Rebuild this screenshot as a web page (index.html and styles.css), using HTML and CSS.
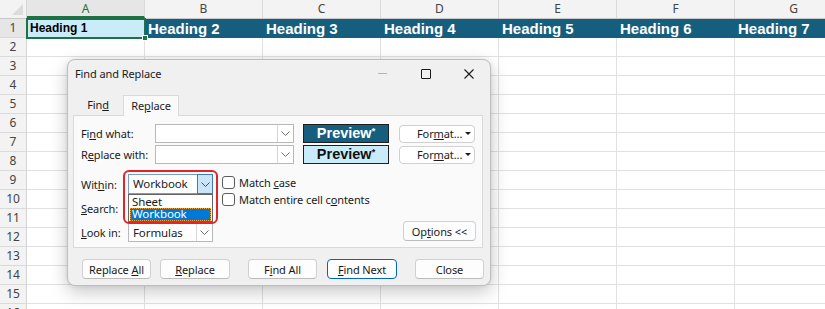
FILE: index.html
```html
<!DOCTYPE html>
<html lang="en">

<head>
  <meta charset="utf-8" />
  <title>Find and Replace</title>
  <link rel="stylesheet" href="styles.css">
</head>

<body>

  <div class="sheet">
    <div class="corner"><span class="corner-tri"></span></div>

    <div class="col-heads">
      <div class="col-head active">A</div>
      <div class="col-head">B</div>
      <div class="col-head">C</div>
      <div class="col-head">D</div>
      <div class="col-head">E</div>
      <div class="col-head">F</div>
      <div class="col-head">G</div>
    </div>

    <div class="row-heads">
      <div class="row-head active">1</div>
      <div class="row-head">2</div>
      <div class="row-head">3</div>
      <div class="row-head">4</div>
      <div class="row-head">5</div>
      <div class="row-head">6</div>
      <div class="row-head">7</div>
      <div class="row-head">8</div>
      <div class="row-head">9</div>
      <div class="row-head">10</div>
      <div class="row-head">11</div>
      <div class="row-head">12</div>
      <div class="row-head">13</div>
      <div class="row-head">14</div>
      <div class="row-head">15</div>
      <div class="row-head">16</div>
    </div>

    <div class="cells">
      <div class="cell-row">
        <div class="cell heading-light selected">Heading 1<span class="handle"></span></div>
        <div class="cell heading-dark">Heading 2</div>
        <div class="cell heading-dark">Heading 3</div>
        <div class="cell heading-dark">Heading 4</div>
        <div class="cell heading-dark">Heading 5</div>
        <div class="cell heading-dark">Heading 6</div>
        <div class="cell heading-dark">Heading 7</div>
      </div>
      <div class="grid-fill"></div>
    </div>
  </div>

  <!-- the dialog floats over the sheet -->
  <div class="dialog">
    <div class="titlebar">
      <span class="title">Find and Replace</span>
      <div class="win-ctrls">
        <span class="ctrl"><i class="min-line"></i></span>
        <span class="ctrl"><i class="max-box"></i></span>
        <span class="ctrl">
          <svg width="10" height="10" viewBox="0 0 10 10">
            <path d="M0.5 0.5 L9.5 9.5 M9.5 0.5 L0.5 9.5" stroke="#1a1a1a" stroke-width="1.1" fill="none" />
          </svg>
        </span>
      </div>
    </div>

    <div class="tabs">
      <span class="tab">Fin<u>d</u></span>
      <span class="tab active">Re<u>p</u>lace</span>
    </div>

    <div class="panel">
      <div class="field-row">
        <span class="lbl">Fi<u>n</u>d what:</span>
        <div class="combo wide">
          <span class="combo-text"></span>
          <span class="drop">
            <svg width="9" height="5" viewBox="0 0 9 5"><path d="M0.5 0.5 L4.5 4.5 L8.5 0.5" fill="none" stroke="#707070" /></svg>
          </span>
        </div>
        <div class="preview dark">Preview<sup>*</sup></div>
        <button class="fmt"><span>For<u>m</u>at...</span><span class="tri"></span></button>
      </div>

      <div class="field-row second">
        <span class="lbl">R<u>e</u>place with:</span>
        <div class="combo wide">
          <span class="combo-text"></span>
          <span class="drop">
            <svg width="9" height="5" viewBox="0 0 9 5"><path d="M0.5 0.5 L4.5 4.5 L8.5 0.5" fill="none" stroke="#707070" /></svg>
          </span>
        </div>
        <div class="preview light">Preview<sup>*</sup></div>
        <button class="fmt"><span>For<u>m</u>at...</span><span class="tri"></span></button>
      </div>

      <div class="lower">
        <div class="opts">
          <div class="opt-row">
            <span class="lbl-s">Wit<u>h</u>in:</span>
            <div class="combo-wrap">
              <div class="combo small pressed">
                <span class="combo-text">Workbook</span>
                <span class="drop">
                  <svg width="9" height="5" viewBox="0 0 9 5"><path d="M0.5 0.5 L4.5 4.5 L8.5 0.5" fill="none" stroke="#505050" /></svg>
                </span>
              </div>
              <div class="drop-list">
                <div class="drop-item">Sheet</div>
                <div class="drop-item chosen">Workbook</div>
              </div>
              <div class="ring"></div>
            </div>
          </div>
          <div class="opt-row">
            <span class="lbl-s"><u>S</u>earch:</span>
          </div>
          <div class="opt-row">
            <span class="lbl-s"><u>L</u>ook in:</span>
            <div class="combo small">
              <span class="combo-text">Formulas</span>
              <span class="drop">
                <svg width="9" height="5" viewBox="0 0 9 5"><path d="M0.5 0.5 L4.5 4.5 L8.5 0.5" fill="none" stroke="#707070" /></svg>
              </span>
            </div>
          </div>
        </div>

        <div class="checks">
          <label class="check"><span class="box"></span><span>Match <u>c</u>ase</span></label>
          <label class="check"><span class="box"></span><span>Match entire cell c<u>o</u>ntents</span></label>
        </div>

        <button class="btn options">Op<u>t</u>ions &lt;&lt;</button>
      </div>
    </div>

    <div class="actions">
      <button class="btn">Replace <u>A</u>ll</button>
      <button class="btn gap-s"><u>R</u>eplace</button>
      <button class="btn gap-l">F<u>i</u>nd All</button>
      <button class="btn gap-m default"><u>F</u>ind Next</button>
      <button class="btn gap-l">Close</button>
    </div>
  </div>

</body>

</html>
```

FILE: styles.css
```css
* {
  padding: 0;
  margin: 0;
  box-sizing: border-box;
}

body {
  width: 825px;
  height: 309px;
  overflow: hidden;
  position: relative;
  background: #ffffff;
  font-family: 'Noto Sans', 'Liberation Sans', sans-serif;
}

/* ---- sheet ---- */

.sheet {
  display: grid;
  grid-template-columns: 27px 1fr;
  grid-template-rows: 19px 1fr;
  height: 309px;
}

.corner {
  position: relative;
  background: #f3f3f3;
  border-right: 1px solid #d4d4d4;
  border-bottom: 1px solid #c8c8c8;
}

.corner-tri {
  position: absolute;
  right: 3px;
  bottom: 3px;
  width: 0;
  height: 0;
  border-left: 11px solid transparent;
  border-bottom: 11px solid #dcdcdc;
}

.col-heads {
  display: flex;
  background: #f3f3f3;
  border-bottom: 1px solid #c8c8c8;
}

.col-head {
  flex: 0 0 118px;
  border-right: 1px solid #dadada;
  text-align: center;
  font-size: 12px;
  line-height: 18px;
  color: #444444;
}

.col-head.active {
  background: #e6e6e6;
  color: #1e7145;
  border-bottom: 2px solid #1e7145;
}

.row-heads {
  background: #f3f3f3;
  border-right: 1px solid #d4d4d4;
}

.row-head {
  height: 19px;
  border-bottom: 1px solid #dadada;
  text-align: center;
  font-size: 12px;
  line-height: 18px;
  color: #444444;
}

.row-head.active {
  background: #e6e6e6;
}

.cells {
  display: flex;
  flex-direction: column;
}

.cell-row {
  display: flex;
  height: 19px;
}

.cell {
  flex: 0 0 118px;
  height: 19px;
  padding-left: 3px;
  white-space: nowrap;
  font-family: 'Liberation Sans', Arial, sans-serif;
  font-weight: bold;
}

.heading-light {
  position: relative;
  background: #caecf9;
  color: #000000;
  font-size: 12px;
  line-height: 19px;
}

.selected::after {
  content: "";
  position: absolute;
  left: -1px;
  top: -1px;
  right: -1px;
  bottom: -1px;
  border: 2px solid #1e7145;
}

.handle {
  position: absolute;
  right: -3px;
  bottom: -3px;
  width: 6px;
  height: 6px;
  background: #1e7145;
  border: 1px solid #ffffff;
  z-index: 1;
}

.heading-dark {
  background: #165e7e;
  color: #ffffff;
  font-size: 15px;
  line-height: 19px;
}

.grid-fill {
  flex: 1;
  background-image:
    linear-gradient(to right, transparent 117px, #e1e1e1 117px),
    linear-gradient(to bottom, transparent 18px, #e1e1e1 18px);
  background-size: 118px 100%, 100% 19px;
}

/* ---- dialog ---- */

.dialog {
  position: absolute;
  left: 67px;
  top: 59px;
  width: 424px;
  height: 227px;
  background: #f0f0f0;
  border: 1px solid #bdbdbd;
  border-radius: 8px;
  box-shadow: 0 6px 18px rgba(0, 0, 0, 0.22), 0 0 4px rgba(0, 0, 0, 0.08);
  font-size: 11px;
  letter-spacing: -0.1px;
  color: #1a1a1a;
}

.titlebar {
  display: flex;
  align-items: center;
  height: 27px;
  padding-left: 7px;
}

.title {
  font-size: 11px;
}

.win-ctrls {
  display: flex;
  margin-left: auto;
}

.ctrl {
  display: flex;
  align-items: center;
  justify-content: center;
  width: 43px;
  height: 27px;
}

.min-line {
  display: block;
  width: 9px;
  height: 1px;
  background: #b4b4b4;
}

.max-box {
  display: block;
  width: 10px;
  height: 10px;
  border: 1px solid #1a1a1a;
  border-radius: 1px;
}

.tabs {
  display: flex;
  align-items: flex-end;
  height: 28px;
  margin-left: 5px;
}

.tab {
  width: 50px;
  height: 20px;
  text-align: center;
  line-height: 20px;
}

.tab.active {
  width: 56px;
  background: #fafafa;
  border: 1px solid #d9d9d9;
  border-bottom: none;
  margin-bottom: -1px;
  position: relative;
  z-index: 1;
  height: 21px;
}

.panel {
  margin-left: 5px;
  width: 410px;
  height: 133px;
  background: #fafafa;
  border: 1px solid #d9d9d9;
  padding: 8px 6px 6px 7px;
}

.field-row {
  display: flex;
  align-items: center;
  height: 19px;
}

.field-row.second {
  margin-top: 2px;
}

.lbl {
  width: 74px;
}

.combo {
  display: flex;
  background: #ffffff;
  border: 1px solid #b8b8b8;
}

.combo.wide {
  width: 139px;
  height: 19px;
}

.combo.small {
  width: 85px;
  height: 19px;
}

.combo-text {
  flex: 1;
  padding-left: 4px;
  line-height: 17px;
  font-size: 11.5px;
}

.drop {
  display: flex;
  align-items: center;
  justify-content: center;
  width: 16px;
  border-left: 1px solid #d6d6d6;
}

.combo.pressed {
  border-color: #7a9cc0;
  height: 20px;
}

.combo.pressed .drop {
  background: #cce4f7;
  border: 1px solid #3c7fb1;
  margin: -1px -1px -1px 0;
}

.preview {
  width: 86px;
  height: 19px;
  margin-left: 9px;
  border: 1px solid #1f1f1f;
  text-align: center;
  font-family: 'Liberation Sans', Arial, sans-serif;
  font-weight: bold;
  font-size: 14.5px;
  letter-spacing: 0;
  line-height: 17px;
}

.preview sup {
  font-size: 9px;
  vertical-align: 4px;
  line-height: 0;
}

.preview.dark {
  background: #165e7e;
  color: #ffffff;
}

.preview.light {
  background: #caecf9;
  color: #111111;
}

.fmt {
  display: flex;
  align-items: center;
  width: 76px;
  height: 18px;
  margin-left: 10px;
  padding-left: 17px;
  background: #ffffff;
  border: 1px solid #d0d0d0;
  border-radius: 4px;
  font-family: inherit;
  font-size: 11px;
  letter-spacing: -0.1px;
  color: #1a1a1a;
}

.tri {
  margin-left: auto;
  margin-right: 3px;
  width: 0;
  height: 0;
  border-left: 3px solid transparent;
  border-right: 3px solid transparent;
  border-top: 3px solid #1a1a1a;
}

.lower {
  display: flex;
  margin-top: 10px;
  height: 68px;
}

.opts {
  display: flex;
  flex-direction: column;
  gap: 4px;
}

.opt-row {
  display: flex;
  align-items: center;
  height: 20px;
}

.lbl-s {
  width: 47px;
}

.combo-wrap {
  position: relative;
}

.drop-list {
  position: absolute;
  left: 0;
  top: 20px;
  width: 85px;
  height: 28px;
  background: #ffffff;
  border: 1px solid #646464;
  padding: 1px;
  z-index: 2;
}

.drop-item {
  height: 12px;
  line-height: 12px;
  padding-left: 2px;
  font-size: 11.5px;
}

.drop-item.chosen {
  background: #0078d7;
  color: #ffffff;
  outline: 1px dotted #f0a030;
  outline-offset: -1px;
  height: 13px;
}

.ring {
  position: absolute;
  left: -5px;
  top: -4px;
  width: 95px;
  height: 54px;
  border: 2px solid #e0242b;
  border-radius: 6px;
  z-index: 3;
}

.checks {
  margin-left: 9px;
}

.check {
  display: flex;
  align-items: center;
  height: 17px;
}

.box {
  width: 13px;
  height: 13px;
  margin-right: 4px;
  background: #ffffff;
  border: 1px solid #5c5c5c;
  border-radius: 3px;
}

.btn {
  height: 20px;
  background: #fdfdfd;
  border: 1px solid #d0d0d0;
  border-bottom-color: #bcbcbc;
  border-radius: 4px;
  font-family: inherit;
  font-size: 11px;
  letter-spacing: -0.1px;
  color: #1a1a1a;
}

.options {
  width: 73px;
  margin-left: auto;
  align-self: flex-end;
  margin-bottom: 1px;
}

.actions {
  display: flex;
  margin-top: 11px;
  padding-left: 14px;
}

.actions .btn {
  width: 69px;
}

.actions .gap-s,
.actions .gap-m {
  width: 70px;
}

.gap-s {
  margin-left: 9px;
}

.gap-m {
  margin-left: 10px;
}

.gap-l {
  margin-left: 18px;
}

.default {
  border: 1px solid #0067c0;
}
```
